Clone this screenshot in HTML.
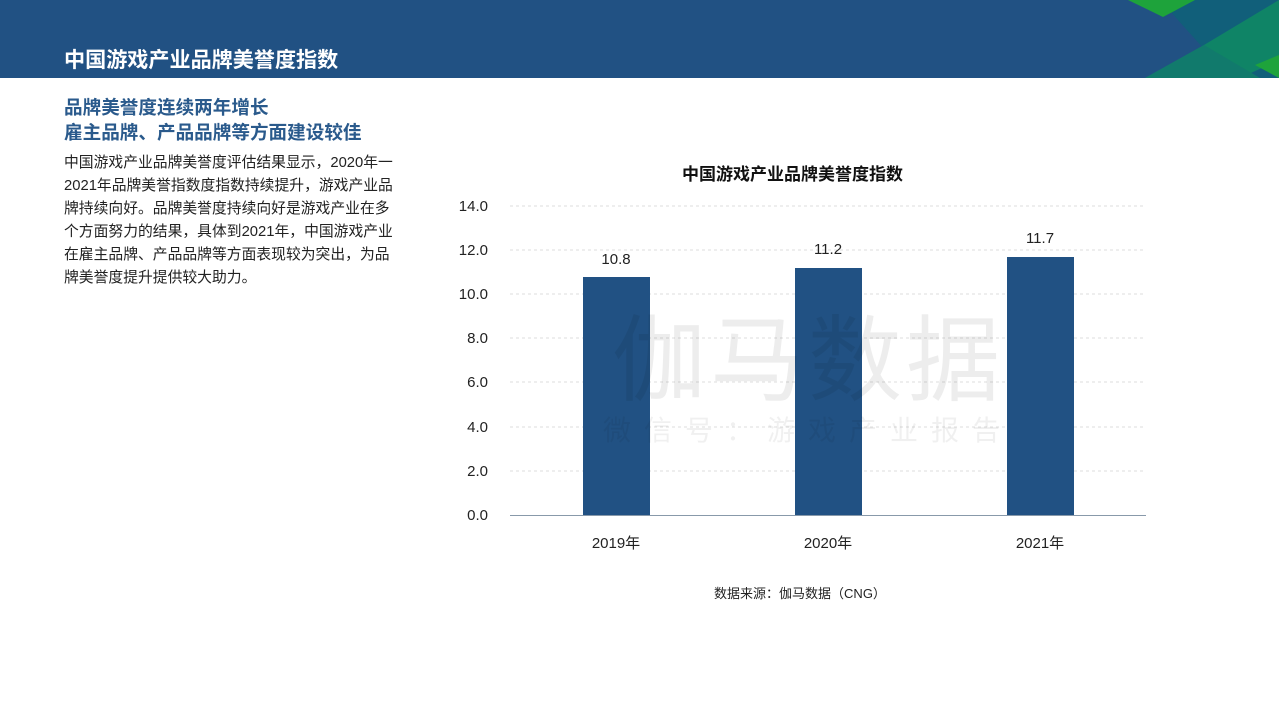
<!DOCTYPE html>
<html><head><meta charset="utf-8"><style>
body{margin:0;width:1279px;height:719px;position:relative;background:#fff;font-family:"Liberation Sans","Noto Sans CJK SC",sans-serif;overflow:hidden}
.hdr{position:absolute;left:0;top:0;width:1279px;height:78px;background:#215183}
.t{position:absolute;white-space:nowrap}
</style></head><body>
<div class="hdr"></div>
<svg style="position:absolute;left:0;top:0" width="1279" height="78">
<polygon points="1160,0 1279,0 1279,78 1230,78" fill="#115f7a"/>
<polygon points="1128,0 1195,0 1163,17" fill="#1ea33b"/>
<polygon points="1204,45 1279,0 1279,60 1240,78 1145,78" fill="#0f8466"/>
<polygon points="1255,65 1279,55 1279,78" fill="#1ea33b"/>
<polygon points="1145,78 1204,45 1260,78" fill="#117a6c"/>
</svg>
<div class="t" style="left:64px;top:44px;font-size:21.1px;font-weight:bold;color:#fff">中国游戏产业品牌美誉度指数</div>
<div class="t" style="left:64px;top:95px;font-size:18.6px;font-weight:bold;color:#2a5a8c;line-height:25px">品牌美誉度连续两年增长<br>雇主品牌、产品品牌等方面建设较佳</div>
<div class="t" style="left:64px;top:152px;font-size:14.8px;color:#222;line-height:23px">中国游戏产业品牌美誉度评估结果显示，2020年一<br>2021年品牌美誉指数度指数持续提升，游戏产业品<br>牌持续向好。品牌美誉度持续向好是游戏产业在多<br>个方面努力的结果，具体到2021年，中国游戏产业<br>在雇主品牌、产品品牌等方面表现较为突出，为品<br>牌美誉度提升提供较大助力。</div>
<div class="t" style="left:682px;top:160px;font-size:17px;font-weight:bold;color:#111">中国游戏产业品牌美誉度指数</div>
<svg style="position:absolute;left:0;top:0" width="1279" height="719" font-family="Liberation Sans,Noto Sans CJK SC,sans-serif">
<g stroke="#ddd" stroke-dasharray="3,3">
<line x1="510" x2="1146" y1="206" y2="206"/><line x1="510" x2="1146" y1="250" y2="250"/><line x1="510" x2="1146" y1="294" y2="294"/><line x1="510" x2="1146" y1="338" y2="338"/><line x1="510" x2="1146" y1="382" y2="382"/><line x1="510" x2="1146" y1="427" y2="427"/><line x1="510" x2="1146" y1="471" y2="471"/>
</g>
<g font-size="15" fill="#222" text-anchor="end">
<text x="488" y="211">14.0</text><text x="488" y="255">12.0</text><text x="488" y="299">10.0</text><text x="488" y="343">8.0</text><text x="488" y="387">6.0</text><text x="488" y="432">4.0</text><text x="488" y="476">2.0</text><text x="488" y="520">0.0</text>
</g>
<rect x="583" y="277" width="67" height="238" fill="#215183"/>
<rect x="795" y="268" width="67" height="247" fill="#215183"/>
<rect x="1007" y="257" width="67" height="258" fill="#215183"/>
<line x1="510" x2="1146" y1="515.5" y2="515.5" stroke="#8899aa"/>
<g font-size="15" fill="#222" text-anchor="middle">
<text x="616" y="264">10.8</text><text x="828" y="254">11.2</text><text x="1040" y="243">11.7</text>
<text x="616" y="548">2019年</text><text x="828" y="548">2020年</text><text x="1040" y="548">2021年</text>
</g>
<text x="808" y="393" font-size="94" fill="#000" fill-opacity="0.07" text-anchor="middle" letter-spacing="4">伽马数据</text>
<text x="808" y="440" font-size="28" fill="#000" fill-opacity="0.06" text-anchor="middle" letter-spacing="13">微信号：游戏产业报告</text>
<text x="800" y="598" font-size="13" fill="#222" text-anchor="middle">数据来源：伽马数据（CNG）</text>
</svg>
</body></html>
